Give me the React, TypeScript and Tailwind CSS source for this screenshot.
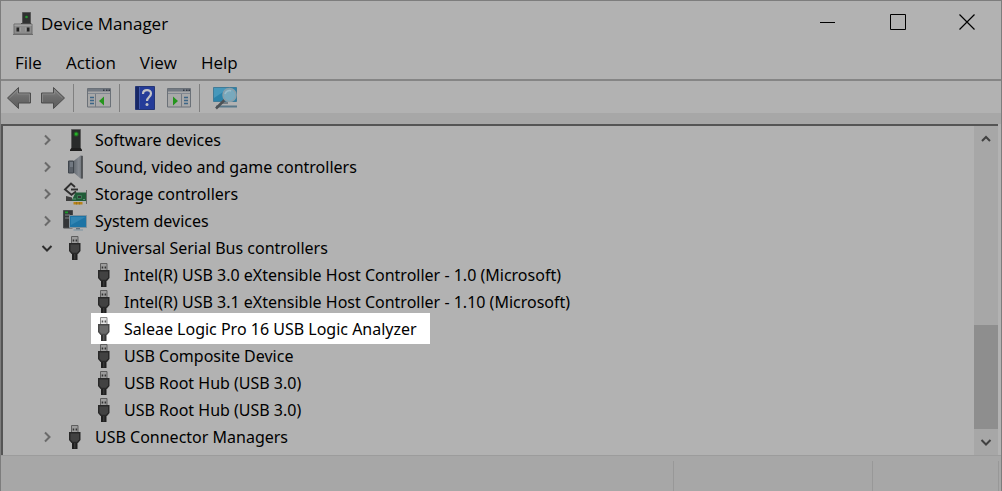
import React from "react";
import clsx from "clsx";

type IconName = "software" | "sound" | "storage" | "system" | "usb";

interface DeviceNode {
  label: string;
  icon: IconName;
  expanded?: boolean;
  children?: { label: string; highlighted?: boolean }[];
}

const menus = ["File", "Action", "View", "Help"];

const devices: DeviceNode[] = [
  { label: "Software devices", icon: "software" },
  { label: "Sound, video and game controllers", icon: "sound" },
  { label: "Storage controllers", icon: "storage" },
  { label: "System devices", icon: "system" },
  {
    label: "Universal Serial Bus controllers",
    icon: "usb",
    expanded: true,
    children: [
      { label: "Intel(R) USB 3.0 eXtensible Host Controller - 1.0 (Microsoft)" },
      { label: "Intel(R) USB 3.1 eXtensible Host Controller - 1.10 (Microsoft)" },
      { label: "Saleae Logic Pro 16 USB Logic Analyzer", highlighted: true },
      { label: "USB Composite Device" },
      { label: "USB Root Hub (USB 3.0)" },
      { label: "USB Root Hub (USB 3.0)" },
    ],
  },
  { label: "USB Connector Managers", icon: "usb" },
];

const UsbIcon: React.FC<{ bright?: boolean }> = ({ bright }) => (
  <svg width="24" height="24" viewBox="0 0 24 24">
    <path d="M8.500 7.500V.5h6.500v7z" fill={bright ? "#e4e4e4" : "#9c9c9c"} stroke={bright ? "#8a8a8a" : "#5e5e5e"} />
    <path d="M9.700 3.500h1.500v2H9.700zM12.600 3.500h1.500v2h-1.500z" fill={bright ? "#555" : "#333"} />
    <path d="M6 7h11.500v8L15 18H8.500L6 15z" fill={bright ? "#484848" : "#282828"} />
    <path d="M7.500 8.500H16v6l-2 2.200H9.500l-2-2.200z" fill={bright ? "#6a6a6a" : "#424242"} />
    <path d="M9 18h5.500v6H9z" fill={bright ? "#333" : "#1f1f1f"} />
    <path d="M11 18h1.500v5.500H11z" fill={bright ? "#5a5a5a" : "#383838"} />
  </svg>
);

const SoftwareIcon = () => (
  <svg width="24" height="24" viewBox="0 0 24 24">
    <path d="M8.500 1.500h9v19h-9z" fill="#292b2b" stroke="#5c5c5c" />
    <path d="M7 21.500L8.500 20h9l1.500 1.500V23H7z" fill="#1e1e1e" />
    <circle cx="13.200" cy="6" r="2.600" fill="#245c24" />
    <circle cx="13.200" cy="6" r="1.500" fill="#25b428" />
  </svg>
);

const SoundIcon = () => (
  <svg width="24" height="24" viewBox="0 0 24 24">
    <defs>
      <linearGradient id="cone" x1="0" x2="1">
        <stop offset="0" stopColor="#5e646b" />
        <stop offset=".6" stopColor="#858a91" />
        <stop offset="1" stopColor="#6c7075" />
      </linearGradient>
    </defs>
    <path d="M10 6.500L17.500.5h2v23h-2L10 17z" fill="url(#cone)" />
    <path d="M19 1v22.500" stroke="#44474a" strokeWidth="1.500" />
    <path d="M5.500 6h5v12h-5z" fill="#5a6068" stroke="#3f454c" />
    <path d="M7 7h3v5H7z" fill="#727982" />
  </svg>
);

const StorageIcon = () => (
  <svg width="24" height="24" viewBox="0 0 24 24">
    <path d="M3 14l6 1.500V19H3z" fill="#3d3d3d" />
    <path d="M13 9.500l-4.500 3.300L2 7.500l6-6 4 3.500" fill="none" stroke="#2f2f2f" strokeWidth="1.900" />
    <path d="M8 7.500h7" stroke="#2f2f2f" strokeWidth="1.900" />
    <path d="M8.500 19l4-8.500H23V19z" fill="#205c38" />
    <path d="M14.500 13.500h4v3h-4z" fill="#323635" stroke="#3c7a55" />
    <path d="M10 17h3M20 17.500h2" stroke="#5f9475" />
    <path d="M23.500 8v14" stroke="#666" />
    <path d="M10.500 20h9v2.500h-9z" fill="#b78317" />
    <path d="M13.500 20v2.500M16.500 20v2.500" stroke="#80661f" strokeWidth=".6" />
  </svg>
);

const SystemIcon = () => (
  <svg width="24" height="24" viewBox="0 0 24 24">
    <path d="M.5 1.500h9V19h-9z" fill="#343638" stroke="#484b4d" />
    <path d="M2 6h5M2 9h4" stroke="#7e8488" />
    <path d="M2 2.500h3v1.800H2z" fill="#1b9c2b" />
    <path d="M6.500 6.500h17V18.500h-17z" fill="#1d74a5" stroke="#81919b" />
    <path d="M8 8h14.500L8 16z" fill="#3185b3" />
    <path d="M13 19h4v1.500h-4z" fill="#60707b" />
    <path d="M10.500 21H20" stroke="#7a91a0" />
  </svg>
);

const deviceIcons: Record<IconName, React.ReactNode> = {
  software: <SoftwareIcon />,
  sound: <SoundIcon />,
  storage: <StorageIcon />,
  system: <SystemIcon />,
  usb: <UsbIcon />,
};

const AppIcon = () => (
  <svg width="20" height="24" viewBox="0 0 20 24">
    <path d="M9.500.5h8v12h-8z" fill="#303131" stroke="#555" />
    <circle cx="13.500" cy="5" r="1.300" fill="#279631" />
    <path d="M8 11h10v1.500H8z" fill="#202020" />
    <path d="M1 12h18v10H1z" fill="#8c8c8c" stroke="#6c6c6c" />
    <path d="M1.500 12.500h17V14h-17z" fill="#a0a0a0" />
    <path d="M3.500 15.500h3v4h-3zM13.500 15.500h3v4h-3z" fill="#222" />
    <path d="M7 15.500v4M13 15.500v4" stroke="#aaa" />
    <path d="M0 22.500h20" stroke="#6c6c6c" />
  </svg>
);

const ArrowIcon: React.FC<{ flip?: boolean }> = ({ flip }) => (
  <svg width="26" height="24" viewBox="0 0 26 24" className={clsx(flip && "-scale-x-100")}>
    <defs>
      <linearGradient id="arrow" x1="0" y1="0" x2="0" y2="1">
        <stop offset="0" stopColor="#858585" />
        <stop offset=".5" stopColor="#6b6b6b" />
        <stop offset="1" stopColor="#5b5b5b" />
      </linearGradient>
    </defs>
    <path d="M1.500 12L12.500 1.500V7h12v10h-12v5.500z" fill="url(#arrow)" stroke="#4c4c4c" strokeLinejoin="round" />
    <path d="M3.500 12l8-7.500V8h12v8" fill="none" stroke="#8a8a8a" strokeWidth=".8" />
  </svg>
);

const PanelIcon: React.FC<{ right?: boolean }> = ({ right }) => (
  <svg width="24" height="20" viewBox="0 0 24 20">
    <path d="M.5.5h23v18.500H.5z" fill="#a9a9a9" stroke="#6b7178" />
    <path d="M1 1h22v2.500H1z" fill="#727982" />
    <path d="M1 5.500h22" stroke="#818891" />
    <path d="M16 2.300h1.500M19 2.300h1.500M21.500 2.300H23" stroke="#343b44" strokeWidth="1.500" />
    {right ? (
      <>
        <path d="M14.500 6v13" stroke="#737a83" />
        <path d="M17 9.500h4M17 12.500h4M17 15.500h4" stroke="#3c6687" strokeWidth="1.500" />
        <path d="M6 8.500l5 4.500-5 4.500z" fill="#25951d" />
      </>
    ) : (
      <>
        <path d="M8.500 6v13" stroke="#737a83" />
        <path d="M3 9.500h4M3 12.500h4M3 15.500h4" stroke="#3c6687" strokeWidth="1.500" />
        <path d="M17 8.500L12 13l5 4.500z" fill="#25951d" />
      </>
    )}
  </svg>
);

const HelpIcon = () => (
  <svg width="20" height="24" viewBox="0 0 20 24">
    <path d="M.5.5h19v23H.5z" fill="#253c99" stroke="#243575" />
    <path d="M1 1h3v22H1z" fill="#182866" />
    <path d="M4.500 1v22" stroke="#4d64b0" strokeWidth=".7" />
    <path d="M8 8c0-5 8-5 8-.5 0 3.500-4 3.500-4 7.500" fill="none" stroke="#c2c2c6" strokeWidth="2.200" />
    <circle cx="12" cy="18.500" r="1.500" fill="#c2c2c6" />
  </svg>
);

const ScanIcon = () => (
  <svg width="26" height="24" viewBox="0 0 26 24">
    <path d="M1.500 1.500h23v14h-23z" fill="#2b83aa" stroke="#417b97" />
    <path d="M2 2h15L2 12z" fill="#4698bb" />
    <path d="M10 16h6v2h-6z" fill="#747e84" />
    <path d="M4 20.500h21" stroke="#58788a" strokeWidth="2" />
    <path d="M12.500 14L4 22.500" stroke="#4d5256" strokeWidth="2.500" />
    <circle cx="17.500" cy="9" r="6.500" fill="#78a9bd" stroke="#8a9fa9" strokeWidth="1.500" />
    <path d="M13 8c1-3 4-4 6-3" fill="none" stroke="#9bbdcb" strokeWidth="1.500" />
  </svg>
);

const Chevron: React.FC<{ dir: "up" | "down" | "right"; className?: string }> = ({ dir, className }) => (
  <svg width="12" height="12" viewBox="0 0 12 12" className={className} fill="none" stroke="currentColor" strokeWidth="2">
    {dir === "right" && <path d="M4 1.500L8.500 6 4 10.500" />}
    {dir === "down" && <path d="M1.500 4L6 8.500 10.500 4" />}
    {dir === "up" && <path d="M2 8l4-4 4 4" />}
  </svg>
);

const TitleBar = () => (
  <header className="flex h-[46px] items-center pl-3">
    <AppIcon />
    <h1 className="ml-2 flex-1">Device Manager</h1>
    <div className="flex h-[42px] self-start">
      <button type="button" aria-label="Minimize" className="flex w-[70px] items-center justify-center">
        <svg width="16" height="16" viewBox="0 0 16 16">
          <path d="M0 8.500h15" stroke="#000" />
        </svg>
      </button>
      <button type="button" aria-label="Maximize" className="flex w-[70px] items-center justify-center">
        <svg width="16" height="16" viewBox="0 0 16 16">
          <path d="M.5.5h15v15H.5z" fill="none" stroke="#000" />
        </svg>
      </button>
      <button type="button" aria-label="Close" className="flex w-[68px] items-center justify-center">
        <svg width="16" height="16" viewBox="0 0 16 16">
          <path d="M.5.5l15 15M15.500.5l-15 15" stroke="#000" strokeWidth="1.200" />
        </svg>
      </button>
    </div>
  </header>
);

const ToolButton: React.FC<{ label: string; children: React.ReactNode }> = ({ label, children }) => (
  <button type="button" aria-label={label} className="flex h-8 w-[34px] items-center justify-center">
    {children}
  </button>
);

const Divider = () => <div className="mx-[3px] h-7 w-px bg-[#808080]" />;

const Toolbar = () => (
  <div className="flex h-8 items-center gap-0 pt-[2px] pl-px">
    <ToolButton label="Back">
      <ArrowIcon />
    </ToolButton>
    <ToolButton label="Forward">
      <ArrowIcon flip />
    </ToolButton>
    <Divider />
    <div className="w-[5px]" />
    <ToolButton label="Show/Hide Console Tree">
      <PanelIcon />
    </ToolButton>
    <Divider />
    <div className="w-[5px]" />
    <ToolButton label="Help">
      <HelpIcon />
    </ToolButton>
    <ToolButton label="Show/Hide Action Pane">
      <PanelIcon right />
    </ToolButton>
    <Divider />
    <div className="w-[5px]" />
    <ToolButton label="Scan for hardware changes">
      <ScanIcon />
    </ToolButton>
  </div>
);

const DeviceTree = () => (
  <ul className="min-w-0 flex-1 pb-[5px] font-['Noto_Sans','Open_Sans',sans-serif] text-base">
    {devices.map((device) => (
      <li key={device.label}>
        <div className="flex h-[27px] items-center pl-8">
          <button
            type="button"
            aria-label={`Toggle ${device.label}`}
            className="flex size-6 items-center justify-center"
          >
            <Chevron
              dir={device.expanded ? "down" : "right"}
              className={device.expanded ? "text-[#2e2e2e]" : "text-[#6a6a6a]"}
            />
          </button>
          <span className="ml-1 flex w-6 shrink-0 justify-center">{deviceIcons[device.icon]}</span>
          <span className="ml-2 whitespace-nowrap">{device.label}</span>
        </div>
        {device.children && (
          <ul className="pl-[88px]">
            {device.children.map((child, index) => (
              <li key={index} className="flex h-[27px] items-center">
                <div
                  className={clsx(
                    "flex h-[31px] shrink-0 items-center pr-[13px] pl-px",
                    child.highlighted && "bg-white"
                  )}
                >
                  <UsbIcon bright={child.highlighted} />
                  <span className="ml-2 whitespace-nowrap">{child.label}</span>
                </div>
              </li>
            ))}
          </ul>
        )}
      </li>
    ))}
  </ul>
);

const ScrollBar = () => (
  <div className="flex w-6 flex-col bg-[#a7a7a7]">
    <button type="button" aria-label="Scroll up" className="flex h-[26px] items-center justify-center">
      <Chevron dir="up" className="text-[#414141]" />
    </button>
    <div className="flex flex-1 flex-col justify-end">
      <div className="h-[104px] bg-[#8e8e8e]" />
    </div>
    <button type="button" aria-label="Scroll down" className="flex h-[26px] items-center justify-center">
      <Chevron dir="down" className="text-[#414141]" />
    </button>
  </div>
);

const App = () => {
  return (
    <div className="w-full border border-[#7d7d7d] bg-[#b2b2b2] font-['Open_Sans','Noto_Sans',sans-serif] text-[17px] leading-6 text-black">
      <TitleBar />
      <nav className="flex h-[34px] items-center border-b-2 border-[#858585] pl-[2px]">
        {menus.map((menu) => (
          <button key={menu} type="button" className="px-3">
            {menu}
          </button>
        ))}
      </nav>
      <Toolbar />
      <div className="h-[11px] bg-[#a7a7a7]" />
      <main className="mr-[3px] flex border-t-2 border-l-2 border-[#555]">
        <DeviceTree />
        <ScrollBar />
      </main>
      <footer className="flex h-9 border-t border-[#9c9c9c] bg-[#a7a7a7] pt-[5px] pr-[2px]">
        <div className="flex-1 border-r border-[#989898]" />
        <div className="w-[199px] border-r border-[#989898]" />
        <div className="w-[126px] border-r border-[#989898]" />
      </footer>
    </div>
  );
};

export default App;
